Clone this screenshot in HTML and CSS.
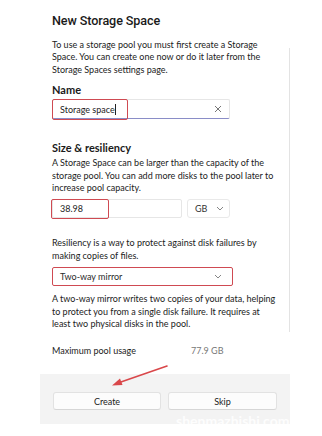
FILE: index.html
```html
<!DOCTYPE html>
<html>
<head>
<meta charset="utf-8">
<link rel="stylesheet" href="styles.css">
</head>
<body>
<div class="page">
  <div class="dialog">
    <div class="body">
      <div class="main">
        <h1 class="title">New Storage Space</h1>
        <p class="text p1">To use a storage pool you must first create a Storage<br>Space. You can create one now or do it later from the<br>Storage Spaces settings page.</p>
        <h2 class="heading h-name">Name</h2>
        <div class="name-input">
          <span class="val">Storage space<span class="caret"></span></span>
          <svg class="clear" width="8" height="8" viewBox="0 0 8 8"><path d="M1 1L7 7M7 1L1 7" stroke="#666" stroke-width="0.9" fill="none"/></svg>
          <span class="mark mark-name"></span>
        </div>
        <h2 class="heading h-size">Size &amp; resiliency</h2>
        <p class="text p2">A Storage Space can be larger than the capacity of the<br>storage pool. You can add more disks to the pool later to<br>increase pool capacity.</p>
        <div class="size-row">
          <div class="size-input"><span class="val">38.98</span><span class="mark mark-size"></span></div>
          <div class="unit"><span>GB</span><svg class="chev" width="8" height="5" viewBox="0 0 8 5"><path d="M1 1L4 4L7 1" stroke="#777" stroke-width="0.9" fill="none"/></svg></div>
        </div>
        <p class="text p3">Resiliency is a way to protect against disk failures by<br>making copies of files.</p>
        <div class="select">
          <span>Two-way mirror</span>
          <svg class="chev" width="8" height="5" viewBox="0 0 8 5"><path d="M1 1L4 4L7 1" stroke="#777" stroke-width="0.9" fill="none"/></svg>
        </div>
        <p class="text p4">A two-way mirror writes two copies of your data, helping<br>to protect you from a single disk failure. It requires at<br>least two physical disks in the pool.</p>
        <div class="usage"><span class="u-label">Maximum pool usage</span><span class="u-val">77.9 GB</span></div>
      </div>
      <div class="divider"></div>
    </div>
    <div class="footer">
      <button class="btn">Create</button>
      <button class="btn">Skip</button>
    </div>
  </div>
  <svg class="arrow" width="70" height="30" viewBox="0 0 70 30"><path d="M63 3L14 20" stroke="#d9474a" stroke-width="1.6" fill="none" stroke-linecap="round"/><path d="M8 22.5L16 15.5L18.5 22Z" fill="#d9474a"/></svg>
  <div class="watermark">shenmazhishi.com</div>
</div>
</body>
</html>
```
FILE: styles.css
```css
* { box-sizing: border-box; }
html, body { margin: 0; padding: 0; background: #fff; }
body { font-family: Lato, "Noto Sans", sans-serif; color: #1c1c1c; }
.page { position: relative; width: 322px; height: 436px; overflow: hidden; }
.dialog { margin-left: 40px; width: 250px; }
.body { display: flex; }
.main { width: 249px; padding: 11px 0 0 12px; }
.divider { width: 1px; background: #e3e3e3; margin-top: 48px; height: 284px; }
.title { margin: 0; font-family: Roboto, Lato, sans-serif; font-size: 12.6px; line-height: 20px; font-weight: 500; letter-spacing: -0.1px; color: #1a1a1a; }
.text { margin: 0; font-size: 9px; line-height: 12.4px; color: #222; white-space: nowrap; }
.p1 { margin-top: 8px; }
.heading { margin: 0; font-size: 11px; line-height: 16px; font-weight: 700; color: #1a1a1a; }
.h-name { margin-top: 6px; }
.name-input { position: relative; margin-top: 1px; width: 178px; height: 20px; background: #fff; border: 1px solid #e6e6e6; border-bottom: 1px solid #8a8dc7; border-radius: 2px; display: flex; align-items: center; justify-content: space-between; padding: 0 7px 0 7px; font-size: 9px; }
.caret { display: inline-block; width: 1px; height: 11px; background: #222; vertical-align: -2px; }
.mark { position: absolute; border: 1.6px solid #cf4a52; border-radius: 2px; }
.mark-name { left: -1px; top: -1px; width: 76px; height: 21px; }
.h-size { margin-top: 21px; }
.p2 { margin-top: 1px; }
.size-row { display: flex; gap: 5px; margin-top: 5px; }
.size-input { position: relative; width: 130px; height: 19px; border: 1px solid #e6e6e6; border-radius: 2px; display: flex; align-items: center; padding-left: 7px; font-size: 9px; }
.mark-size { left: -2px; top: -1px; width: 58px; height: 20px; }
.unit { width: 43px; height: 19px; border: 1px solid #e9e9e9; border-radius: 3px; display: flex; align-items: center; padding-left: 7px; gap: 9px; font-size: 9px; color: #333; }
.p3 { margin-top: 19px; }
.select { margin-top: 5px; width: 181px; height: 19px; border: 1.6px solid #cf4a52; border-radius: 2px; display: flex; align-items: center; justify-content: space-between; padding: 0 10px 0 7px; font-size: 9px; color: #2a2a2a; }
.p4 { margin-top: 7px; }
.usage { margin-top: 14px; display: flex; font-size: 9px; line-height: 14px; color: #222; }
.u-label { width: 139px; }
.u-val { color: #777; }
.footer { margin-top: 16px; height: 50px; background: #f3f3f3; display: flex; gap: 7px; padding: 18px 0 0 13px; }
.btn { width: 108px; height: 18px; background: #fcfcfc; border: 1px solid #e2e2e2; border-bottom-color: #d6d6d6; border-radius: 3px; font-family: inherit; font-size: 9px; color: #222; padding: 0; }
.btn + .btn { width: 109px; }
.arrow { position: absolute; left: 104px; top: 363px; }
.watermark { position: absolute; left: 176px; top: 412px; font-size: 14px; font-weight: 700; color: rgba(255,255,255,0.85); white-space: nowrap; }
```
